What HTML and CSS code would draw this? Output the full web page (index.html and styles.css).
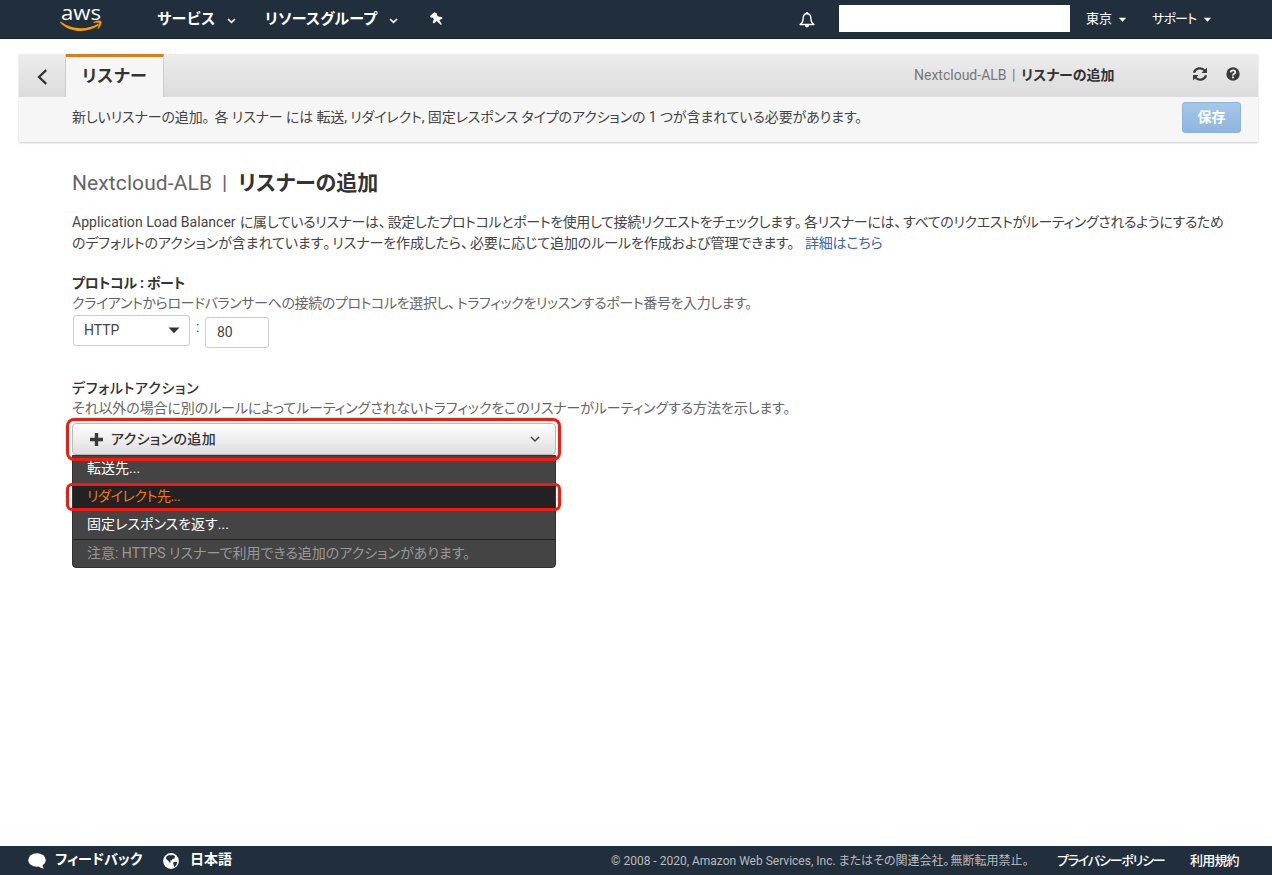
FILE: index.html
```html
<!DOCTYPE html>
<html lang="ja">
<head>
<meta charset="utf-8">
<title>リスナーの追加</title>
<link rel="stylesheet" href="styles.css">
</head>
<body>
<header class="topnav">
  <svg class="logo" width="44" height="36" viewBox="0 0 44 36">
    <text class="logo-text" x="1" y="18.500" textLength="40" lengthAdjust="spacingAndGlyphs">aws</text>
    <g transform="translate(0 2.500)">
    <path d="M.6 18C11 26 27 27 38 20.300l.8 1.500C27 30.500 9 29 .2 19.200z" fill="#f90"/>
    <path d="M33.800 18.600c3-1.600 6.500-1.500 7.300-.8.7 1-.4 5-2.700 7.200-.5.4-.8.2-.6-.3.800-2 1.700-4.600 1.300-5.200-.5-.6-3.200-.5-5.100-.3-.6.100-.7-.3-.2-.6z" fill="#f90" stroke="#f90" stroke-width=".4"/>
    </g>
  </svg>
  <span class="nav-main services">サービス</span>
  <svg class="chev c1" width="9" height="6" viewBox="0 0 9 6"><path d="M1 1l3.500 3.300L8 1"/></svg>
  <span class="nav-main groups">リソースグループ</span>
  <svg class="chev c2" width="9" height="6" viewBox="0 0 9 6"><path d="M1 1l3.500 3.300L8 1"/></svg>
  <svg class="pin" width="14" height="14" viewBox="0 0 14 14"><path d="M5.200.3L.8 4.300l1.200 1.400 1.700-.2 1.200 1.700-1.300 3.200 1.400 1 2.600-2.400 4.400 3.900.8-.7-2.500-4.300 3-1.100-.1-1.900-3.300-.1-2-1.600.2-1.700z" fill="#fff"/></svg>
  <svg class="bell" width="18" height="18" viewBox="0 0 18 18"><path d="M9 2.500c-3 .3-3.900 2.800-3.900 5.200 0 2.600-.8 4.300-3.100 5.800h14c-2.300-1.500-3.100-3.200-3.100-5.800 0-2.400-.9-4.900-3.900-5.200z" fill="none" stroke="#fff" stroke-width="1.300" stroke-linejoin="round"/><path d="M8.200 1h1.600v2H8.200zM6.800 14h4.400c-.2 1.500-1 2.300-2.200 2.300S7 15.500 6.800 14z" fill="#fff"/></svg>
  <span class="account"></span>
  <span class="nav-sub region">東京</span>
  <svg class="chev c3" width="9" height="6" viewBox="0 0 9 6"><path class="solid" d="M.8.800h7.400L4.500 4.800z"/></svg>
  <span class="nav-sub support">サポート</span>
  <svg class="chev c4" width="9" height="6" viewBox="0 0 9 6"><path class="solid" d="M.8.800h7.400L4.500 4.800z"/></svg>
</header>

<section class="toolbar">
  <div class="tabs">
    <div class="back"><svg width="12" height="16" viewBox="0 0 12 16"><path d="M10.200 1.200L3 8l7.200 6.800" fill="none" stroke="#333" stroke-width="2.300"/></svg></div>
    <div class="tab"><span class="tab-text">リスナー</span></div>
    <div class="crumb"><span class="crumb-name">Nextcloud-ALB</span><span class="crumb-bar">|</span><span class="crumb-title">リスナーの追加</span></div>
    <svg class="refresh" width="16" height="16" viewBox="0 0 16 16"><path d="M2 6.800A6 5.700 0 0 1 12.800 4.800M14 9.200A6 5.700 0 0 1 3.200 11.200" fill="none" stroke="#3b3b3b" stroke-width="2.200"/><path d="M15 1.500v5.400H9.400zM1 14.500V9.100h5.600z" fill="#3b3b3b"/></svg>
    <svg class="help" width="14" height="14" viewBox="0 0 14 14"><circle cx="7" cy="7" r="6.700" fill="#3b3b3b"/><path d="M4.700 5.300C5 2.700 9.300 2.900 9.300 5.200 9.300 6.900 7 6.800 7 8.400" fill="none" stroke="#eee" stroke-width="1.800"/><path d="M6 9.400h2v1.900H6z" fill="#eee"/></svg>
  </div>
  <div class="note"><span class="note-text">新しいリスナーの追加<span class="stop wide">。</span>各 リスナー には 転送, リダイレクト, 固定レスポンス タイプのアクションの 1 つが含まれている必要があります。</span><span class="save"><span>保存</span></span></div>
</section>

<main class="content">
  <h1 class="title"><span class="title-name">Nextcloud-ALB</span><span class="title-bar">|</span><span class="title-text">リスナーの追加</span></h1>
  <div class="para"><span class="p1a">Application Load Balancer</span><span class="p1b">に属しているリスナーは<span class="stop">、</span>設定したプロトコルとポートを使用して接続リクエストをチェックします<span class="stop">。</span>各リスナーには<span class="stop">、</span>すべてのリクエストがルーティングされるようにするため</span></div>
  <div class="para"><span class="p2">のデフォルトのアクションが含まれています<span class="stop">。</span>リスナーを作成したら<span class="stop">、</span>必要に応じて追加のルールを作成および管理できます。</span><a class="link">詳細はこちら</a></div>

  <h2 class="label label-port"><span>プロトコル : ポート</span></h2>
  <div class="hint"><span class="h1t">クライアントからロードバランサーへの接続のプロトコルを選択し<span class="stop">、</span>トラフィックをリッスンするポート番号を入力します。</span></div>
  <div class="fields">
    <div class="select"><span>HTTP</span><svg width="12" height="7" viewBox="0 0 12 7"><path d="M.5.500h11L6 6.300z" fill="#333"/></svg></div>
    <span class="colon">:</span>
    <div class="port">80</div>
  </div>

  <h2 class="label label-action"><span>デフォルトアクション</span></h2>
  <div class="hint"><span class="h2t">それ以外の場合に別のルールによってルーティングされないトラフィックをこのリスナーがルーティングする方法を示します。</span></div>
  <div class="picker">
    <div class="add"><svg class="plus" width="13" height="13" viewBox="0 0 13 13"><path d="M4.800 0h3.400v4.800H13v3.400H8.200V13H4.800V8.200H0V4.800h4.800z" fill="#3a3a3a"/></svg><span class="add-text">アクションの追加</span><svg class="add-chev" width="10" height="7" viewBox="0 0 10 7"><path d="M1 1l4 4 4-4" fill="none" stroke="#444" stroke-width="1.500"/></svg></div>
    <div class="menu">
      <div class="item first"><span class="m1">転送先...</span></div>
      <div class="item active"><span class="m2">リダイレクト先...</span></div>
      <div class="item"><span class="m3">固定レスポンスを返す...</span></div>
      <div class="item info"><span class="m4">注意: HTTPS リスナーで利用できる追加のアクションがあります。</span></div>
    </div>
    <div class="ring ring-add"></div>
    <div class="ring ring-item"></div>
  </div>
</main>

<footer class="footer">
  <svg class="bubble" width="18" height="16" viewBox="0 0 18 16"><ellipse cx="9" cy="7" rx="8.800" ry="6.700" fill="#fff"/><path d="M10 12.500c1.500 2 3.500 3 6 3-1.300-1.200-1.600-2.700-1.400-4.500z" fill="#fff"/></svg>
  <span class="f1">フィードバック</span>
  <svg class="globe" width="16" height="16" viewBox="0 0 16 16"><circle cx="8" cy="8" r="7.900" fill="#fff"/><path d="M3.200 3.800L6 2l2 .6 1-.9 3 1.300-.5 2.400-2 .6-.8 1.600-2-.2 1.500 1.900-1.500.2L4.500 7 3 6zM10 9.500l3-.8 1.300.8-1.300 3.100-2 1.400-.4-2.200z" fill="#212f3d"/></svg>
  <span class="f2">日本語</span>
  <span class="f3">© 2008 - 2020, Amazon Web Services, Inc. またはその関連会社<span class="stop">。</span>無断転用禁止。</span>
  <span class="f4">プライバシーポリシー</span>
  <span class="f5">利用規約</span>
</footer>
</body>
</html>
```

FILE: styles.css
```css
* { box-sizing: border-box; }
body {
  margin: 0;
  width: 1272px;
  height: 875px;
  overflow: hidden;
  display: flex;
  flex-direction: column;
  background: #fff;
  color: #444;
  font: 14px/20px Roboto, "Noto Sans CJK JP", sans-serif;
  font-feature-settings: "palt";
  white-space: nowrap;
}
svg { display: block; flex: none; }
span, a { flex: none; }
/* Full-width punctuation, tightened to leave a small trailing gap */
.stop { font-feature-settings: "palt" 0; letter-spacing: -5px; }
.wide { letter-spacing: -2px; }

.topnav {
  height: 39px;
  flex: none;
  display: flex;
  align-items: center;
  background: #212f3d;
  border-bottom: 1px solid #17202c;
  color: #fff;
}
.logo { margin-left: 60px; width: 44px; overflow: visible; }
.logo-text { font: 500 20.500px "Open Sans", sans-serif; fill: #fff; }
.nav-main { font-size: 15px; font-weight: 700; letter-spacing: .5px; }
.services { margin-left: 53px; width: 59px; }
.groups { margin-left: 29px; width: 113px; letter-spacing: .2px; }
.chev path { fill: none; stroke: #fff; stroke-width: 1.6; }
.chev .solid { fill: #fff; stroke: none; }
.c1 { margin: 3px 0 0 11px; }
.c2 { margin: 3px 0 0 11px; }
.pin { margin-left: 31px; }
.bell { margin-left: 355px; margin-top: 2px; }
.account { margin: -2px 0 0 23px; width: 231px; height: 27px; background: #fff; }
.nav-sub { font-size: 13px; }
.region { margin-left: 16px; width: 25px; }
.c3 { margin: 2px 0 0 7px; }
.support { margin-left: 25px; width: 44px; letter-spacing: -.8px; }
.c4 { margin: 2px 0 0 7px; }

.toolbar {
  margin: 15px 14px 0 19px;
  height: 88px;
  flex: none;
  background: #f6f6f6;
  box-shadow: 0 1px 2px rgba(0, 0, 0, .2);
}
.tabs {
  height: 43px;
  display: flex;
  align-items: center;
  background: linear-gradient(#ececec, #dcdcdc);
}
.back { width: 47px; height: 43px; padding: 15px 0 0 17px; border-right: 1px solid #ccc; }
.tab {
  width: 98px;
  height: 43px;
  background: #f6f6f6;
  border-top: 3px solid #e07b1c;
  border-right: 1px solid #ccc;
  padding: 9px 0 0 16px;
  font-size: 17px;
  font-weight: 700;
  letter-spacing: .6px;
  color: #333;
}
.crumb { margin: -2px 0 0 750px; width: 202px; display: flex; }
.crumb-name { width: 93px; color: #777; }
.crumb-bar { width: 14px; padding-left: 5px; color: #777; }
.crumb-title { font-weight: 700; color: #333; }
.refresh { margin: -3px 0 0 76px; }
.help { margin: -4px 0 0 18px; }
.note { display: flex; align-items: flex-start; justify-content: space-between; padding: 5px 17px 0 53px; }
.note-text { margin-top: 5px; letter-spacing: -.12px; }
.save {
  width: 59px;
  height: 31px;
  border: 1px solid #8db4dc;
  border-radius: 3px;
  background: linear-gradient(#a6c7e8, #8db6df);
  color: #fff;
  font-weight: 700;
  line-height: 28px;
  text-align: center;
}

.content { flex: 1; padding: 0 0 0 72px; }
.title { margin: 27px 0 0; height: 28px; display: flex; font-size: 21px; line-height: 28px; font-weight: 400; }
.title-name { width: 140px; letter-spacing: .1px; color: #666; }
.title-bar { width: 26px; padding-left: 10px; color: #666; }
.title-text { font-weight: 700; color: #333; }
.para { display: flex; height: 21px; line-height: 21px; }
.title + .para { margin-top: 15px; }
.p1a { width: 168px; font-size: 14px; letter-spacing: .03px; }
.p1b { letter-spacing: -.37px; }
.p2 { width: 724px; letter-spacing: -.09px; }
.link { margin-left: 9px; color: #3a62b8; letter-spacing: -.2px; }
.label { margin: 0; height: 20px; font-size: 14px; line-height: 20px; font-weight: 700; color: #333; }
.label-port { margin-top: 19px; letter-spacing: -.3px; }
.hint { height: 21px; line-height: 21px; color: #666; }
.h1t { letter-spacing: -.38px; }
.h2t { letter-spacing: -.1px; }
.fields { display: flex; margin-left: 1px; height: 34px; }
.select {
  width: 117px;
  height: 31px;
  margin-top: 1px;
  padding: 0 9px 0 10px;
  display: flex;
  align-items: center;
  justify-content: space-between;
  border: 1px solid #ccc;
  border-radius: 3px;
}
.select span { margin-top: -2px; }
.colon { width: 15px; padding-left: 6px; margin-top: 3px; }
.port { width: 64px; height: 31px; margin-top: 3px; padding-left: 11px; line-height: 28px; border: 1px solid #ccc; border-radius: 3px; }
.label-action { margin-top: 30px; font-weight: 500; letter-spacing: .7px; }
.picker { position: relative; width: 484px; height: 145px; margin-top: 4px; }
.add {
  height: 32px;
  display: flex;
  align-items: center;
  padding: 0 15px 0 17px;
  border: 1px solid #bbb;
  border-radius: 4px;
  background: linear-gradient(#fff, #dedede);
  color: #333;
  font-weight: 500;
  letter-spacing: .35px;
}
.plus { margin-right: 8px; }
.add-chev { margin-left: auto; }
.menu { height: 113px; background: #444; border: 1px solid #333; border-radius: 0 0 4px 4px; color: #fff; overflow: hidden; }
.item { height: 28px; padding-left: 14px; line-height: 27px; }
.first { height: 27px; line-height: 24px; }
.active { background: #222; color: #f07818; }
.m2 { letter-spacing: -.4px; }
.info { border-top: 1px solid #222; color: #999; }
.ring { position: absolute; left: -6px; width: 495px; border: 3px solid #f5190f; }
.ring-add { top: -5px; height: 43px; border-radius: 8px; }
.ring-item { top: 60px; height: 28px; border-radius: 6px; }

.footer {
  height: 29px;
  flex: none;
  display: flex;
  align-items: center;
  background: #212f3d;
  color: #fff;
}
.bubble { margin-left: 28px; }
.f1 { margin: -3px 0 0 9px; width: 88px; font-weight: 700; }
.globe { margin-left: 20px; }
.f2 { margin: -3px 0 0 11px; width: 42px; font-weight: 700; }
.f3 { margin-left: 379px; width: 420px; font-size: 12px; color: #bbb; }
.f4 { margin-left: 26px; width: 109px; font-size: 13px; font-weight: 500; letter-spacing: -1.2px; }
.f5 { margin-left: 24px; font-size: 13px; font-weight: 500; letter-spacing: -.8px; }
```
